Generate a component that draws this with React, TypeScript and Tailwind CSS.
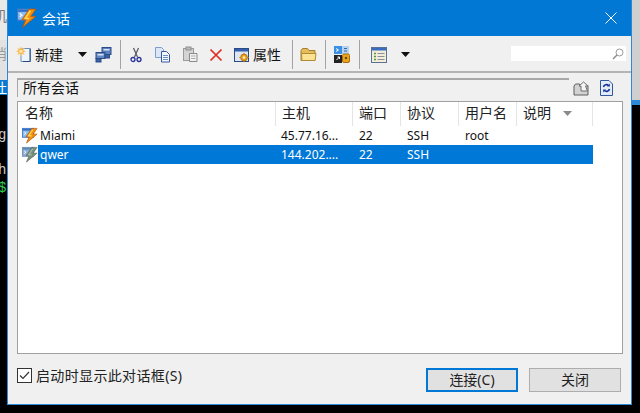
const cjk = "font-['Noto_Sans','Noto_Sans_CJK_SC',sans-serif]";

function BoltIcon({ gray = false, size = 18 }: { gray?: boolean; size?: number }) {
  return (
    <svg width={size} height={size} viewBox="0 0 18 18">
      <rect x="0.500" y="1" width="12.500" height="10" fill={gray ? "#8fb0d4" : "#8dbcf0"} stroke={gray ? "#6f8fb5" : "#3f78c4"} />
      <rect x="1" y="1.500" width="11.500" height="2" fill={gray ? "#5b88bb" : "#2f6fc8"} />
      <path d="M2.500 5l2 1.500-2 1.500" fill="none" stroke="#fff" strokeWidth="1" />
      <path d="M11 1L4.500 10.500H8L5 17.500 17 7.500h-4.500L17 1z" fill={gray ? "#75907c" : "#f0900f"} stroke={gray ? "#56695c" : "#b84f0a"} strokeWidth="0.700" />
      <path d="M12 2.500L7.500 9.500H11" fill="none" stroke={gray ? "#a9b8ac" : "#ffd84f"} strokeWidth="1.400" />
    </svg>
  );
}

function NewIcon() {
  return (
    <svg width="17" height="17" viewBox="0 0 17 17">
      <path d="M5 2.500h9.500v13H5z" fill="#eef4fb" stroke="#6f8fb8" />
      <path d="M14 3v12.500H7" fill="none" stroke="#23477f" strokeWidth="1" />
      <path d="M5 0.500l1 2.400 2.400-1-1 2.400 2.400 1-2.400 1 1 2.400-2.400-1-1 2.400-1-2.400-2.400 1 1-2.400-2.400-1 2.400-1-1-2.400 2.400 1z" fill="#f8b54a" stroke="#f3dca5" strokeWidth="0.400" />
      <circle cx="5" cy="5.300" r="1.600" fill="#fde8a8" />
    </svg>
  );
}

function ServersIcon() {
  return (
    <svg width="17" height="17" viewBox="0 0 17 17">
      <rect x="7" y="1.500" width="9" height="7" fill="#5b82bd" stroke="#2a4a88" />
      <rect x="8.500" y="3" width="6" height="1.500" fill="#d5e2f3" />
      <rect x="1" y="6.500" width="9" height="6" fill="#6488c2" stroke="#2a4a88" />
      <rect x="2.500" y="8" width="6" height="1.500" fill="#d5e2f3" />
      <rect x="1" y="12.500" width="5" height="3.500" fill="#3a5fa3" stroke="#2a4a88" />
      <rect x="10" y="8.500" width="4.500" height="3.500" fill="#3a5fa3" stroke="#2a4a88" />
    </svg>
  );
}

function ScissorsIcon() {
  return (
    <svg width="12" height="16" viewBox="0 0 12 16">
      <path d="M3.500 1l4 9M8.500 1L4.500 10" stroke="#55555f" strokeWidth="1.200" fill="none" />
      <circle cx="3" cy="12.500" r="2" fill="none" stroke="#27309a" strokeWidth="1.300" />
      <circle cx="9" cy="12.500" r="2" fill="none" stroke="#27309a" strokeWidth="1.300" />
    </svg>
  );
}

function CopyIcon() {
  return (
    <svg width="17" height="17" viewBox="0 0 17 17">
      <path d="M1.500 1.500h6l2 2v8h-8z" fill="#dbe7f6" stroke="#7f9fcb" />
      <path d="M7.500 5.500h5l3 3v7.500h-8z" fill="#f3f7fc" stroke="#34589a" />
      <path d="M9 9.500h5M9 11.500h5M9 13.500h5" stroke="#6f8fc0" />
    </svg>
  );
}

function PasteIcon() {
  return (
    <svg width="16" height="17" viewBox="0 0 16 17">
      <rect x="1.500" y="2.500" width="10" height="12" fill="#d4d4d4" stroke="#9a9a9a" />
      <rect x="4" y="1" width="5" height="3" fill="#bdbdbd" stroke="#8d8d8d" />
      <path d="M7.500 7.500h7.500v8h-7.500z" fill="#f2f2f2" stroke="#8a8a8a" />
      <path d="M9 10h4.500M9 12.500h4.500" stroke="#aaa" />
    </svg>
  );
}

function DeleteIcon() {
  return (
    <svg width="14" height="14" viewBox="0 0 14 14">
      <path d="M1.500 1.500l11 11M12.500 1.500l-11 11" stroke="#dc2c20" strokeWidth="1.700" />
    </svg>
  );
}

function PropsIcon() {
  return (
    <svg width="16" height="16" viewBox="0 0 16 16">
      <rect x="0.500" y="1.500" width="14" height="13" fill="#dfe6f2" stroke="#2c4a86" />
      <rect x="1" y="2" width="13" height="2.500" fill="#2f5fae" />
      <circle cx="10" cy="10.500" r="3.400" fill="#e8a21e" stroke="#a8650c" strokeWidth="0.800" />
      <circle cx="10" cy="10.500" r="1.200" fill="#fff2c4" />
      <path d="M10 5.800v1.300M10 14v1.200M5.300 10.500h1.300M13.400 10.500h1.300" stroke="#c98414" strokeWidth="1.200" />
    </svg>
  );
}

function FolderIcon() {
  return (
    <svg width="17" height="15" viewBox="0 0 17 15">
      <path d="M1 3.500L2.500 1.500h5l1.500 2h6v10h-14z" fill="#e5bb5b" stroke="#a77f2c" />
      <path d="M1.500 6.500h14.500l-1 7h-13z" fill="#fbe391" stroke="#b28b38" />
    </svg>
  );
}

function TransferIcon() {
  return (
    <svg width="16" height="17" viewBox="0 0 16 17">
      <rect x="0" y="0" width="8" height="8" fill="#3a8fe6" />
      <rect x="8" y="0" width="7" height="8" fill="#b5d3ef" />
      <path d="M2 2.500l2.500 1.500L2 5.500" fill="none" stroke="#fff" />
      <path d="M10 2.500h3M10 5h3" stroke="#2f68b0" />
      <rect x="0" y="9" width="8" height="8" fill="#222" />
      <path d="M2.500 14l3-3M3.500 11h2v2" stroke="#fff" fill="none" />
      <rect x="8.500" y="8" width="7" height="8.500" rx="1.500" fill="#eaa51f" stroke="#a96e0c" />
      <circle cx="12" cy="12" r="1.200" fill="#6b4506" />
    </svg>
  );
}

function ListViewIcon() {
  return (
    <svg width="16" height="16" viewBox="0 0 16 16">
      <rect x="0.500" y="0.500" width="15" height="15" fill="#f2ecd8" stroke="#5c7196" />
      <rect x="1" y="1" width="14" height="2.500" fill="#3a6cc0" />
      <path d="M3 6.500h2M3 9.500h2M3 12.500h2" stroke="#4d9b4a" strokeWidth="1.500" />
      <path d="M6.500 6.500h7M6.500 9.500h7M6.500 12.500h7" stroke="#8a8f98" />
    </svg>
  );
}

function DropArrow({ color = "#111" }: { color?: string }) {
  return (
    <svg width="9" height="5" viewBox="0 0 9 5">
      <path d="M0 0h9L4.500 5z" fill={color} />
    </svg>
  );
}

function Sep() {
  return <div className="h-[29px] w-px bg-[#a3a3a3]" />;
}

function UpFolderIcon() {
  return (
    <svg width="17" height="15" viewBox="0 0 17 15">
      <path d="M1 5l1.500-2h4l1 1.500h7.500v9.500h-14z" fill="#d2d2d2" stroke="#5f5f5f" />
      <path d="M8 10V5H6L10.500 1 15 5h-2.500L14.500 10z" fill="#f5f5f5" stroke="#6d6d6d" />
    </svg>
  );
}

function RefreshDocIcon() {
  return (
    <svg width="13" height="16" viewBox="0 0 13 16">
      <path d="M0.500 0.500h8.500l3.500 3.500v11.500h-12z" fill="#e3ecf8" stroke="#3058a0" />
      <path d="M3.500 7a3 3 0 0 1 5-1.500M9.500 9a3 3 0 0 1-5 1.500" fill="none" stroke="#14309c" strokeWidth="1.600" />
      <path d="M9.800 3.500v3H7M3.200 12.500v-3H6" fill="#14309c" />
    </svg>
  );
}

const cols = "grid grid-cols-[238px_77px_48px_58px_58px_76px]";

const rows = [
  { name: "Miami", host: "45.77.16...", port: "22", proto: "SSH", user: "root", selected: false },
  { name: "qwer", host: "144.202....", port: "22", proto: "SSH", user: "", selected: true },
];

export default function App() {
  return (
    <div className={`flex h-[413px] w-[640px] overflow-hidden bg-black ${cjk}`}>
      {/* terminal behind the dialog, left edge */}
      <div className="flex w-[7px] flex-col overflow-hidden text-[14px] leading-[20px]">
        <div className="h-[40px] bg-[#e9e9e9] pt-[6px] text-[#777]"><span className="ml-[-7px]">机</span></div>
        <div className="h-[40px] bg-[#e2e2e2] pt-[4px] text-[#999]"><span className="ml-[-7px]">消</span></div>
        <div className="h-[15px] bg-[#0a78d0] text-white"><span className="ml-[-7px] block leading-[15px]">吐</span></div>
        <div className="flex-1 bg-black pt-[31px] font-['Liberation_Mono',monospace] leading-[18px] text-[#ccc]">
          <div className="ml-[-2px]">g</div>
          <div className="mt-[17px] ml-[-2px]">h</div>
          <div className="ml-[-2px] text-[#2fcf4f]">$</div>
        </div>
      </div>

      {/* dialog */}
      <div className="flex h-[405px] w-[625px] flex-col border border-t-0 border-[#2a8ad8] bg-[#f0f0f0]">
        <div className="flex h-[36px] shrink-0 items-center bg-[#0078d4] pl-[9px] text-white">
          <BoltIcon size={20} />
          <span className="ml-[5px] text-[14px]">会话</span>
          <svg className="mr-[14px] ml-auto" width="12" height="12" viewBox="0 0 12 12">
            <path d="M0.500 0.500l11 11M11.500 0.500l-11 11" stroke="#fff" strokeWidth="1" />
          </svg>
        </div>

        {/* toolbar */}
        <div className="flex h-[37px] shrink-0 items-center border-b-2 border-[#b4b4b4] pt-[2px] pl-[8px] text-[14px] text-[#111]">
          <NewIcon />
          <span className="ml-[2px] w-[29px] whitespace-nowrap">新建</span>
          <span className="ml-[14px] flex"><DropArrow /></span>
          <span className="ml-[8px] flex"><ServersIcon /></span>
          <span className="ml-[8px] flex"><Sep /></span>
          <span className="ml-[9px] flex"><ScissorsIcon /></span>
          <span className="ml-[12px] flex"><CopyIcon /></span>
          <span className="ml-[11px] flex"><PasteIcon /></span>
          <span className="ml-[11px] flex"><DeleteIcon /></span>
          <span className="ml-[11px] flex"><PropsIcon /></span>
          <span className="ml-[3px] w-[29px] whitespace-nowrap">属性</span>
          <span className="ml-[10px] flex"><Sep /></span>
          <span className="ml-[7px] flex"><FolderIcon /></span>
          <span className="ml-[8px] flex"><Sep /></span>
          <span className="ml-[8px] flex"><TransferIcon /></span>
          <span className="ml-[9px] flex"><Sep /></span>
          <span className="ml-[11px] flex"><ListViewIcon /></span>
          <span className="ml-[14px] flex"><DropArrow /></span>
          <div className="mb-[2px] ml-[101px] flex h-[15px] w-[115px] items-center justify-end bg-white pr-[2px]">
            <svg width="12" height="12" viewBox="0 0 12 12">
              <circle cx="7.500" cy="4.500" r="3.500" fill="none" stroke="#9a9a9a" />
              <path d="M5 7l-4 4" stroke="#8a8a8a" strokeWidth="1.500" />
            </svg>
          </div>
        </div>

        <div className="flex min-h-0 flex-1 flex-col px-[9px]">
          {/* path bar */}
          <div className="mt-[5px] flex h-[19px] shrink-0 items-stretch">
            <div className="flex w-[552px] items-center border-t-2 border-l border-[#a8a8a8] bg-[#f0f0f0] pb-[2px] pl-[5px] text-[14px] leading-none text-[#111]">
              所有会话
            </div>
            <span className="mt-[3px] ml-[4px] flex"><UpFolderIcon /></span>
            <span className="mt-[2px] ml-[10px] flex"><RefreshDocIcon /></span>
          </div>

          {/* session list */}
          <div className="mt-[4px] h-[253px] w-[606px] shrink-0 border border-[#a0a0a0] bg-white">
            <div className="flex h-[24px] text-[14px] text-[#222]">
              <div className="w-[20px]" />
              <div className={cols}>
                <span className="ml-[-13px] border-r border-[#e5e5e5] leading-[22px]">名称</span>
                <span className="border-r border-[#e5e5e5] pl-[6px] leading-[22px]">主机</span>
                <span className="border-r border-[#e5e5e5] pl-[6px] leading-[22px]">端口</span>
                <span className="border-r border-[#e5e5e5] pl-[6px] leading-[22px]">协议</span>
                <span className="border-r border-[#e5e5e5] pl-[6px] leading-[22px]">用户名</span>
                <span className="flex items-start border-r border-[#e5e5e5] pl-[6px] leading-[22px]">
                  说明
                  <span className="mt-[9px] ml-[12px] flex"><DropArrow color="#8a8a8a" /></span>
                </span>
              </div>
            </div>
            {rows.map((r) => (
              <div key={r.name} className="flex h-[19px] items-center text-[12px] text-[#111]">
                <div className="flex w-[20px] justify-start pl-[4px]">
                  <BoltIcon gray={r.selected} size={17} />
                </div>
                <div className={`${cols} h-[19px] items-center ${r.selected ? "bg-[#0078d7] text-white" : ""}`}>
                  <span className="pl-[2px]">{r.name}</span>
                  <span className="pl-[5px]">{r.host}</span>
                  <span className="pl-[6px]">{r.port}</span>
                  <span className="pl-[6px]">{r.proto}</span>
                  <span className="pl-[6px]">{r.user}</span>
                  <span />
                </div>
              </div>
            ))}
          </div>

          {/* footer */}
          <div className="mt-[14px] flex items-start text-[14px] text-[#222]">
            <div className="flex h-[15px] w-[15px] items-center justify-center border border-[#333] bg-white">
              <svg width="11" height="9" viewBox="0 0 11 9">
                <path d="M1 4.500L4 7.500 10 1" fill="none" stroke="#333" strokeWidth="1.200" />
              </svg>
            </div>
            <span className="ml-[4px] leading-[16px] tracking-[0.35px]">启动时显示此对话框(S)</span>
            <button className="ml-auto h-[24px] w-[92px] border-2 border-[#0078d7] bg-[#e1e1e1] text-[14px] leading-none">
              连接(C)
            </button>
            <button className="mr-[1px] ml-[11px] h-[24px] w-[92px] border border-[#adadad] bg-[#e1e1e1] text-[14px] leading-none">
              关闭
            </button>
          </div>
        </div>
      </div>

      {/* right edge behind the dialog */}
      <div className="flex flex-1 flex-col">
        <div className="h-[100px] bg-[#cfcfcf]" />
        <div className="h-[5px] bg-[#2a8ad8]" />
        <div className="flex-1 bg-black" />
      </div>
    </div>
  );
}
